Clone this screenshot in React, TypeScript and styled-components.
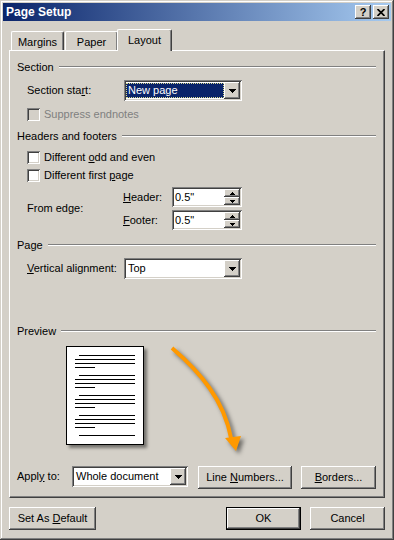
import styled, { createGlobalStyle } from 'styled-components';

const GlobalStyle = createGlobalStyle`
  html, body {
    margin: 0;
    padding: 0;
    background: #d4d0c8;
  }
  body {
    font-family: "Liberation Sans", Arial, sans-serif;
    font-size: 11px;
    line-height: 13px;
    color: #000;
    overflow: hidden;
  }
  * {
    box-sizing: border-box;
  }
`;

// classic 3d borders
const raised = `
  box-shadow: inset -1px -1px #404040, inset 1px 1px #ffffff, inset -2px -2px #808080, inset 2px 2px #d4d0c8;
`;
const sunken = `
  box-shadow: inset 1px 1px #808080, inset -1px -1px #ffffff, inset 2px 2px #404040, inset -2px -2px #d4d0c8;
`;

const Window = styled.div`
  width: 394px;
  height: 540px;
  padding: 3px;
  display: flex;
  flex-direction: column;
  background: #d4d0c8;
  box-shadow: inset -1px -1px #404040, inset 1px 1px #d4d0c8, inset -2px -2px #808080, inset 2px 2px #ffffff;
`;

const TitleBar = styled.div`
  height: 18px;
  display: flex;
  align-items: center;
  padding: 0 2px 0 3px;
  background: linear-gradient(90deg, #0a246a, #a6caf0);
  color: #fff;
`;

const TitleText = styled.span`
  font-weight: bold;
  font-size: 12px;
`;

const CaptionButtons = styled.div`
  margin-left: auto;
  display: flex;
  gap: 2px;
`;

const CaptionButton = styled.div`
  width: 16px;
  height: 14px;
  background: #d4d0c8;
  ${raised};
  display: flex;
  align-items: center;
  justify-content: center;
  color: #000;
  font-weight: bold;
  font-size: 11px;
`;

const Body = styled.div`
  flex: 1;
  display: flex;
  flex-direction: column;
  padding: 8px 6px 7px;
`;

const TabStrip = styled.div`
  height: 21px;
  display: flex;
  align-items: flex-end;
  gap: 1px;
  padding-left: 2px;
  position: relative;
  z-index: 1;
`;

const Tab = styled.div<{ $w: number; $active?: boolean }>`
  width: ${p => (p.$active ? p.$w + 4 : p.$w)}px;
  height: ${p => (p.$active ? 22 : 19)}px;
  margin: ${p => (p.$active ? '0 -2px -1px -2px' : '0')};
  background: #d4d0c8;
  border-top: 1px solid #fff;
  border-left: 1px solid #fff;
  border-right: 1px solid #404040;
  border-radius: 2px 2px 0 0;
  box-shadow: inset -1px 0 #808080;
  display: flex;
  align-items: center;
  justify-content: center;
  padding-top: ${p => (p.$active ? 0 : 2)}px;
`;

const Panel = styled.div`
  flex: 1;
  position: relative;
  display: flex;
  flex-direction: column;
  border: 1px solid;
  border-color: #fff #404040 #404040 #fff;
  box-shadow: inset -1px -1px #808080;
  padding: 9px 8px 0 7px;
`;

const GroupHeader = styled.div<{ $mt?: number }>`
  height: 14px;
  display: flex;
  align-items: center;
  gap: 5px;
  margin-top: ${p => p.$mt ?? 0}px;
`;

const Rule = styled.div`
  flex: 1;
  height: 2px;
  border-top: 1px solid #808080;
  border-bottom: 1px solid #fff;
`;

const Row = styled.div<{ $mt: number; $indent?: boolean }>`
  display: flex;
  align-items: center;
  margin-top: ${p => p.$mt}px;
  padding-left: ${p => (p.$indent ? 10 : 0)}px;
`;

const Label = styled.span<{ $w?: number }>`
  width: ${p => (p.$w ? `${p.$w}px` : 'auto')};
  flex-shrink: 0;
  white-space: nowrap;
`;

const U = styled.span`
  text-decoration: underline;
`;

const CheckBox = styled.div<{ $disabled?: boolean }>`
  width: 13px;
  height: 13px;
  flex-shrink: 0;
  margin-right: 4px;
  background: ${p => (p.$disabled ? '#d4d0c8' : '#fff')};
  ${sunken};
`;

const CheckText = styled.span<{ $disabled?: boolean }>`
  color: ${p => (p.$disabled ? '#808080' : '#000')};
`;

const ComboBox = styled.div<{ $w: number }>`
  width: ${p => p.$w}px;
  height: 21px;
  flex-shrink: 0;
  padding: 2px;
  display: flex;
  background: #fff;
  ${sunken};
`;

const ComboField = styled.div<{ $selected?: boolean }>`
  flex: 1;
  display: flex;
  align-items: center;
  padding-left: 2px;
  ${p =>
    p.$selected &&
    `
    margin: 1px 0 1px 0;
    background: #0a246a;
    color: #fff;
    outline: 1px dotted #d8d890;
    outline-offset: -1px;
  `}
`;

const DropButton = styled.div`
  width: 16px;
  height: 17px;
  background: #d4d0c8;
  ${raised};
  display: flex;
  align-items: center;
  justify-content: center;
`;

const SpinBox = styled.div`
  width: 70px;
  height: 20px;
  padding: 2px;
  display: flex;
  background: #fff;
  ${sunken};
`;

const SpinField = styled.div`
  flex: 1;
  display: flex;
  align-items: center;
  padding-left: 1px;
`;

const SpinButtons = styled.div`
  width: 16px;
  display: flex;
  flex-direction: column;
`;

const SpinButton = styled.div`
  height: 8px;
  background: #d4d0c8;
  ${raised};
  display: flex;
  align-items: center;
  justify-content: center;
`;

const EdgeGrid = styled.div`
  display: grid;
  grid-template-columns: 96px 49px 70px;
  grid-template-rows: 20px 20px;
  row-gap: 3px;
  align-items: center;
  margin-top: 5px;
  padding-left: 10px;
`;

const EdgeLabel = styled.span`
  grid-row: 1 / span 2;
`;

const PreviewPage = styled.div`
  width: 78px;
  height: 99px;
  margin: 8px 0 0 49px;
  background: #fff;
  box-shadow: 3px 3px 3px rgba(0, 0, 0, 0.45);
  svg {
    display: block;
  }
`;

const ApplyRow = styled.div`
  display: flex;
  align-items: flex-start;
  margin-top: 21px;
`;

const ApplyLabel = styled.span`
  width: 55px;
  height: 21px;
  display: flex;
  align-items: center;
`;

const ActionGroup = styled.div`
  display: flex;
  gap: 9px;
  margin-left: 10px;
`;

const Button = styled.div<{ $w: number; $default?: boolean }>`
  width: ${p => p.$w}px;
  height: 23px;
  display: flex;
  align-items: center;
  justify-content: center;
  background: #d4d0c8;
  ${p =>
    p.$default
      ? 'box-shadow: inset 0 0 0 1px #000, inset -2px -2px #404040, inset 2px 2px #ffffff, inset -3px -3px #808080;'
      : raised}
`;

const BottomRow = styled.div`
  display: flex;
  margin-top: 9px;
  gap: 9px;
`;

const Spacer = styled.div`
  flex: 1;
`;

const Arrow = styled.svg`
  position: absolute;
  left: 150px;
  top: 289px;
  width: 90px;
  height: 120px;
  overflow: visible;
  pointer-events: none;
  filter: drop-shadow(3px 3px 2px rgba(0, 0, 0, 0.5));
`;

const DownGlyph = () => (
  <svg width="7" height="4" shapeRendering="crispEdges">
    <polygon points="0,0 7,0 3.5,4" fill="#000" />
  </svg>
);

const SpinGlyph = ({ up }: { up?: boolean }) => (
  <svg width="5" height="3" shapeRendering="crispEdges">
    <polygon points={up ? '2.5,0 5,3 0,3' : '0,0 5,0 2.5,3'} fill="#000" />
  </svg>
);

function Combo({ w, value, selected }: { w: number; value: string; selected?: boolean }) {
  return (
    <ComboBox $w={w}>
      <ComboField $selected={selected}>{value}</ComboField>
      <DropButton>
        <DownGlyph />
      </DropButton>
    </ComboBox>
  );
}

function Spin({ value }: { value: string }) {
  return (
    <SpinBox>
      <SpinField>{value}</SpinField>
      <SpinButtons>
        <SpinButton>
          <SpinGlyph up />
        </SpinButton>
        <SpinButton>
          <SpinGlyph />
        </SpinButton>
      </SpinButtons>
    </SpinBox>
  );
}

// lines on the little preview page: [y, x1, x2]
const previewLines: [number, number, number][] = [];
[9, 29, 49, 69].forEach(top => {
  previewLines.push([top, 13, 69], [top + 4, 9, 69], [top + 8, 9, 69], [top + 12, 9, 29]);
});
previewLines.push([89, 13, 69]);

const tabs = [
  { name: 'Margins', w: 53 },
  { name: 'Paper', w: 53 },
  { name: 'Layout', w: 51, active: true },
];

export default function App() {
  return (
    <>
      <GlobalStyle />
      <Window>
        <TitleBar>
          <TitleText>Page Setup</TitleText>
          <CaptionButtons>
            <CaptionButton>?</CaptionButton>
            <CaptionButton>
              <svg width="8" height="7" viewBox="0 0 8 7">
                <path d="M0.5 0 L7.5 7 M7.5 0 L0.5 7" stroke="#000" strokeWidth="1.7" />
              </svg>
            </CaptionButton>
          </CaptionButtons>
        </TitleBar>
        <Body>
          <TabStrip>
            {tabs.map(t => (
              <Tab key={t.name} $w={t.w} $active={t.active}>
                {t.name}
              </Tab>
            ))}
          </TabStrip>
          <Panel>
            <GroupHeader>
              <span>Section</span>
              <Rule />
            </GroupHeader>
            <Row $mt={6} $indent>
              <Label $w={97}>
                Section sta<U>r</U>t:
              </Label>
              <Combo w={118} value="New page" selected />
            </Row>
            <Row $mt={7} $indent>
              <CheckBox $disabled />
              <CheckText $disabled>Suppress endnotes</CheckText>
            </Row>

            <GroupHeader $mt={8}>
              <span>Headers and footers</span>
              <Rule />
            </GroupHeader>
            <Row $mt={8} $indent>
              <CheckBox />
              <CheckText>
                Different <U>o</U>dd and even
              </CheckText>
            </Row>
            <Row $mt={5} $indent>
              <CheckBox />
              <CheckText>
                Different first <U>p</U>age
              </CheckText>
            </Row>
            <EdgeGrid>
              <EdgeLabel>From edge:</EdgeLabel>
              <Label>
                <U>H</U>eader:
              </Label>
              <Spin value={'0.5"'} />
              <Label>
                <U>F</U>ooter:
              </Label>
              <Spin value={'0.5"'} />
            </EdgeGrid>

            <GroupHeader $mt={8}>
              <span>Page</span>
              <Rule />
            </GroupHeader>
            <Row $mt={6} $indent>
              <Label $w={97}>
                <U>V</U>ertical alignment:
              </Label>
              <Combo w={118} value="Top" />
            </Row>

            <GroupHeader $mt={45}>
              <span>Preview</span>
              <Rule />
            </GroupHeader>
            <PreviewPage>
              <svg width="78" height="99" shapeRendering="crispEdges">
                <rect x="0.5" y="0.5" width="77" height="98" fill="#fff" stroke="#000" />
                {previewLines.map(([y, x1, x2], i) => (
                  <line key={i} x1={x1} x2={x2} y1={y + 0.5} y2={y + 0.5} stroke="#000" />
                ))}
              </svg>
            </PreviewPage>

            <ApplyRow>
              <ApplyLabel>
                Appl<U>y</U>&nbsp;to:
              </ApplyLabel>
              <Combo w={116} value="Whole document" />
              <ActionGroup>
                <Button $w={94}>
                  Line&nbsp;<U>N</U>umbers...
                </Button>
                <Button $w={75}>
                  <U>B</U>orders...
                </Button>
              </ActionGroup>
            </ApplyRow>

            <Arrow viewBox="0 0 90 120">
              <path d="M12 8 C 40 32, 64 60, 71 98" fill="none" stroke="#ff9900" strokeWidth="4" />
              <polygon points="65,98 81,96 76,111" fill="#ff9900" />
            </Arrow>
          </Panel>
          <BottomRow>
            <Button $w={87}>
              Set As&nbsp;<U>D</U>efault
            </Button>
            <Spacer />
            <Button $w={75} $default>
              OK
            </Button>
            <Button $w={75}>Cancel</Button>
          </BottomRow>
        </Body>
      </Window>
    </>
  );
}
